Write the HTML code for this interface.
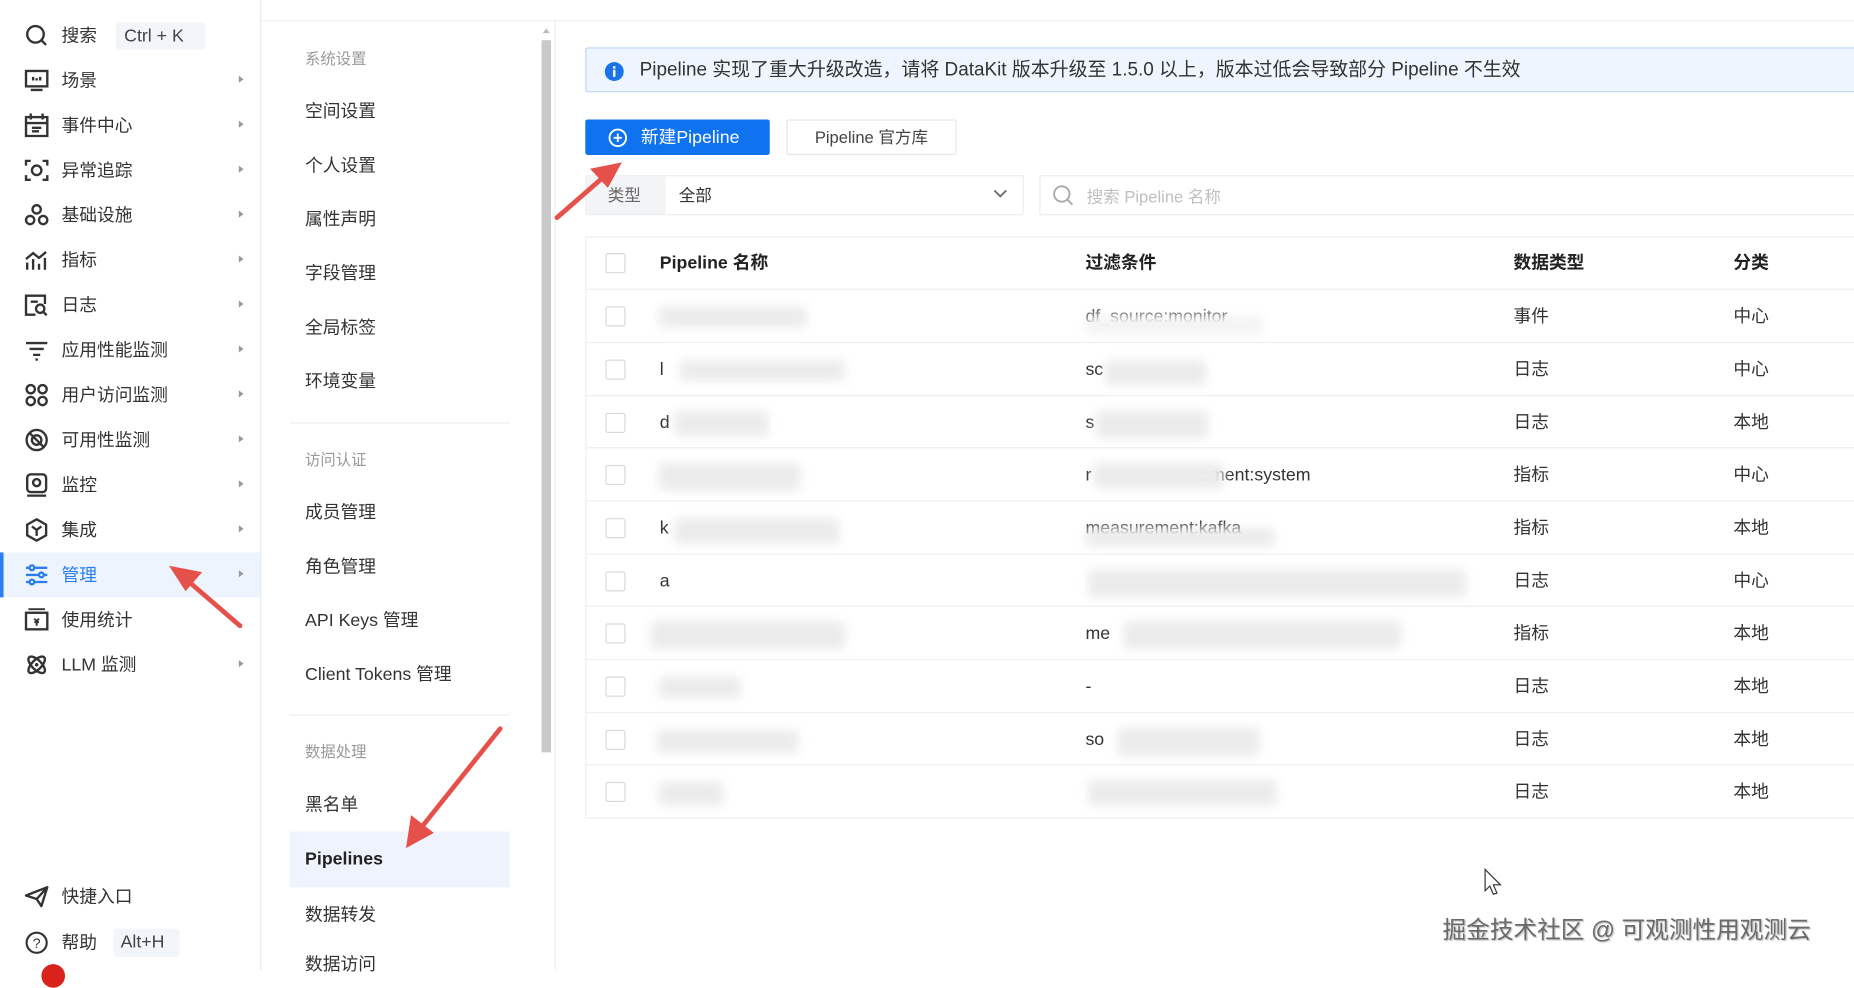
<!DOCTYPE html>
<html><head><meta charset="utf-8"><style>
*{box-sizing:border-box;margin:0;padding:0}
html,body{width:1854px;height:970px;overflow:hidden;background:#fff}
#w{position:absolute;left:0;top:0;width:1568px;height:820px;transform:scale(1.18240,1.18293);transform-origin:0 0;font-family:"Liberation Sans","Noto Sans CJK SC",sans-serif;color:#333}
.a{position:absolute}
.si{position:absolute;left:20px;width:22px;height:20px}
.st{position:absolute;left:52px;font-size:15px;color:#333;line-height:22px}
.ar{position:absolute;left:202px;width:0;height:0;border-left:4px solid #999;border-top:3.5px solid transparent;border-bottom:3.5px solid transparent}
.m{position:absolute;left:258px;font-size:15px;color:#333;line-height:22px}
.g{position:absolute;left:258px;font-size:13px;color:#999;line-height:20px}
.row{position:absolute;left:495px;width:1073px;height:45px;border-top:1px solid #eceef1;font-size:15px}
.row span{position:absolute;top:13px;line-height:20px}
.cb{position:absolute;left:17px;top:14px;width:17px;height:17px;border:1px solid #d9d9d9;border-radius:2px;background:#fff}
.bl{position:absolute;background:#ececec;filter:blur(4px);border-radius:4px}
</style></head><body><div id="w">
<div class="a" style="left:220px;top:17px;width:1348px;height:1px;background:#eef0f2"></div>
<div class="a" style="left:220px;top:0;width:1px;height:820px;background:#e8e8e8"></div>
<div class="a" style="left:469px;top:17px;width:1px;height:803px;background:#eef0f2"></div>

<svg class="si" style="top:20px" viewBox="0 0 22 20"><circle cx="10" cy="9" r="7" fill="none" stroke="#333" stroke-width="2"/><path d="M15 14l4 4" stroke="#333" stroke-width="2"/></svg>
<div class="st" style="top:20px">搜索</div>
<div class="a" style="left:98px;top:19px;width:76px;height:23px;background:#f2f5fa;border-radius:3px;font-size:15px;line-height:23px;padding-left:7px;color:#444">Ctrl + K</div>
<svg class="si" style="top:58px" viewBox="0 0 22 20"><rect x="2" y="2" width="18" height="13" fill="none" stroke="#333" stroke-width="2"/><path d="M6 18h10M8 7v3M11 8v2M14 7v3" stroke="#333" stroke-width="2"/></svg>
<div class="st" style="top:58px">场景</div><div class="ar" style="top:64px"></div>
<svg class="si" style="top:96px" viewBox="0 0 22 20"><rect x="2" y="3" width="18" height="16" fill="none" stroke="#333" stroke-width="2"/><path d="M6 0v5M16 0v5M2 8h18M7 12h8M7 15h6" stroke="#333" stroke-width="2"/></svg>
<div class="st" style="top:96px">事件中心</div><div class="ar" style="top:102px"></div>
<svg class="si" style="top:134px" viewBox="0 0 22 20"><path d="M2 6V2h4M16 2h4v4M20 14v4h-4M6 18H2v-4" fill="none" stroke="#333" stroke-width="2"/><circle cx="11" cy="10" r="4" fill="none" stroke="#333" stroke-width="2"/></svg>
<div class="st" style="top:134px">异常追踪</div><div class="ar" style="top:140px"></div>
<svg class="si" style="top:172px" viewBox="0 0 22 20"><circle cx="11" cy="5" r="3.5" fill="none" stroke="#333" stroke-width="2"/><circle cx="5.5" cy="14" r="3.5" fill="none" stroke="#333" stroke-width="2"/><circle cx="16.5" cy="14" r="3.5" fill="none" stroke="#333" stroke-width="2"/></svg>
<div class="st" style="top:172px">基础设施</div><div class="ar" style="top:178px"></div>
<svg class="si" style="top:210px" viewBox="0 0 22 20"><path d="M3 18v-6M8 18V9M13 18v-5M18 18V8M2 9l6-5 5 4 6-5" fill="none" stroke="#333" stroke-width="2"/></svg>
<div class="st" style="top:210px">指标</div><div class="ar" style="top:216px"></div>
<svg class="si" style="top:248px" viewBox="0 0 22 20"><path d="M10 18H2V2h16v7" fill="none" stroke="#333" stroke-width="2"/><circle cx="14" cy="13" r="3.5" fill="none" stroke="#333" stroke-width="2"/><path d="M16.5 15.5l3 3M6 7h6" stroke="#333" stroke-width="2"/></svg>
<div class="st" style="top:248px">日志</div><div class="ar" style="top:254px"></div>
<svg class="si" style="top:286px" viewBox="0 0 22 20"><path d="M2 4h18M5 9h12M8 14h6M10 18h2" stroke="#333" stroke-width="2"/></svg>
<div class="st" style="top:286px">应用性能监测</div><div class="ar" style="top:292px"></div>
<svg class="si" style="top:324px" viewBox="0 0 22 20"><circle cx="6" cy="5" r="3.5" fill="none" stroke="#333" stroke-width="2"/><circle cx="16" cy="5" r="3.5" fill="none" stroke="#333" stroke-width="2"/><circle cx="6" cy="15" r="3.5" fill="none" stroke="#333" stroke-width="2"/><circle cx="16" cy="15" r="3.5" fill="none" stroke="#333" stroke-width="2"/></svg>
<div class="st" style="top:324px">用户访问监测</div><div class="ar" style="top:330px"></div>
<svg class="si" style="top:362px" viewBox="0 0 22 20"><circle cx="11" cy="10" r="8.5" fill="none" stroke="#333" stroke-width="2"/><circle cx="11" cy="10" r="4" fill="none" stroke="#333" stroke-width="2"/><path d="M5 4l12 12" stroke="#333" stroke-width="2"/></svg>
<div class="st" style="top:362px">可用性监测</div><div class="ar" style="top:368px"></div>
<svg class="si" style="top:400px" viewBox="0 0 22 20"><rect x="3" y="1" width="16" height="15" rx="3" fill="none" stroke="#333" stroke-width="2"/><circle cx="11" cy="8" r="3" fill="none" stroke="#333" stroke-width="2"/><path d="M3 19h16" stroke="#333" stroke-width="2"/></svg>
<div class="st" style="top:400px">监控</div><div class="ar" style="top:406px"></div>
<svg class="si" style="top:438px" viewBox="0 0 22 20"><path d="M11 1l8 4.5v9L11 19l-8-4.5v-9z" fill="none" stroke="#333" stroke-width="2"/><path d="M7 7l4 3 4-3M11 10v5" fill="none" stroke="#333" stroke-width="2"/></svg>
<div class="st" style="top:438px">集成</div><div class="ar" style="top:444px"></div>
<div class="a" style="left:0;top:467px;width:220px;height:38px;background:#eef4fe"></div>
<div class="a" style="left:0;top:467px;width:3px;height:38px;background:#2a7ef0"></div>
<svg class="si" style="top:476px" viewBox="0 0 22 20"><path d="M2 4h18M2 10h18M2 16h18" stroke="#2a7ef0" stroke-width="2"/><circle cx="7" cy="4" r="2" fill="#fff" stroke="#2a7ef0" stroke-width="2"/><circle cx="15" cy="10" r="2" fill="#fff" stroke="#2a7ef0" stroke-width="2"/><circle cx="7" cy="16" r="2" fill="#fff" stroke="#2a7ef0" stroke-width="2"/></svg>
<div class="st" style="top:476px;color:#2a7ef0">管理</div><div class="ar" style="top:482px"></div>
<svg class="si" style="top:514px" viewBox="0 0 22 20"><rect x="2" y="4" width="18" height="14" fill="none" stroke="#333" stroke-width="2"/><path d="M4 1h14M9 9l2 2 2-2M11 11v4M9 12h4" stroke="#333" stroke-width="1.6" fill="none"/></svg>
<div class="st" style="top:514px">使用统计</div>
<svg class="si" style="top:552px" viewBox="0 0 22 20"><ellipse cx="11" cy="10" rx="9" ry="4" transform="rotate(45 11 10)" fill="none" stroke="#333" stroke-width="2"/><ellipse cx="11" cy="10" rx="9" ry="4" transform="rotate(-45 11 10)" fill="none" stroke="#333" stroke-width="2"/><circle cx="11" cy="10" r="1.5" fill="#333"/></svg>
<div class="st" style="top:552px">LLM 监测</div><div class="ar" style="top:558px"></div>
<svg class="si" style="top:748px" viewBox="0 0 22 20"><path d="M2 9L20 2l-5 16-4-6zM11 12l9-10" fill="none" stroke="#333" stroke-width="2" stroke-linejoin="round"/></svg>
<div class="st" style="top:748px">快捷入口</div>
<svg class="si" style="top:787px" viewBox="0 0 22 20"><circle cx="11" cy="10" r="8.5" fill="none" stroke="#333" stroke-width="1.8"/><text x="11" y="14.5" font-size="12" text-anchor="middle" fill="#333" font-family="Liberation Sans">?</text></svg>
<div class="st" style="top:787px">帮助</div>
<div class="a" style="left:96px;top:785px;width:56px;height:24px;background:#f2f5fa;border-radius:3px;font-size:15px;line-height:24px;padding-left:6px;color:#444">Alt+H</div>
<div class="a" style="left:35px;top:815px;width:20px;height:20px;border-radius:50%;background:#d9221c"></div>

<div class="g" style="top:40px">系统设置</div>
<div class="m" style="top:84px">空间设置</div>
<div class="m" style="top:130px">个人设置</div>
<div class="m" style="top:175px">属性声明</div>
<div class="m" style="top:221px">字段管理</div>
<div class="m" style="top:267px">全局标签</div>
<div class="m" style="top:312px">环境变量</div>
<div class="a" style="left:245px;top:357px;width:186px;height:1px;background:#eceef1"></div>
<div class="g" style="top:379px">访问认证</div>
<div class="m" style="top:423px">成员管理</div>
<div class="m" style="top:469px">角色管理</div>
<div class="m" style="top:514px">API Keys 管理</div>
<div class="m" style="top:560px">Client Tokens 管理</div>
<div class="a" style="left:245px;top:604px;width:186px;height:1px;background:#eceef1"></div>
<div class="g" style="top:626px">数据处理</div>
<div class="m" style="top:670px">黑名单</div>
<div class="a" style="left:245px;top:703px;width:186px;height:47px;background:#eef3fd"></div>
<div class="m" style="top:716px;font-weight:bold;color:#222">Pipelines</div>
<div class="m" style="top:763px">数据转发</div>
<div class="m" style="top:805px">数据访问</div>
<div class="a" style="left:458px;top:34px;width:8px;height:602px;background:#c9c9c9"></div>
<div class="a" style="left:459px;top:24px;width:0;height:0;border-bottom:4px solid #bbb;border-left:3px solid transparent;border-right:3px solid transparent"></div>

<div class="a" style="left:495px;top:40px;width:1080px;height:38px;background:#eef5fe;border:1px solid #bcd6fb;border-radius:2px"></div>
<svg class="a" style="left:511px;top:52px" width="17" height="17" viewBox="0 0 17 17"><circle cx="8.5" cy="8.5" r="8" fill="#1a73e8"/><rect x="7.5" y="7" width="2" height="6" fill="#fff"/><rect x="7.5" y="4" width="2" height="2" fill="#fff"/></svg>
<div class="a" style="left:541px;top:50px;font-size:16px;line-height:20px;color:#333">Pipeline 实现了重大升级改造，请将 DataKit 版本升级至 1.5.0 以上，版本过低会导致部分 Pipeline 不生效</div>

<div class="a" style="left:495px;top:101px;width:156px;height:30px;background:#0f72ee;border-radius:2px"></div>
<svg class="a" style="left:514px;top:108px" width="17" height="17" viewBox="0 0 17 17"><circle cx="8.5" cy="8.5" r="7" fill="none" stroke="#fff" stroke-width="1.6"/><path d="M8.5 5v7M5 8.5h7" stroke="#fff" stroke-width="1.6"/></svg>
<div class="a" style="left:542px;top:107px;font-size:15px;line-height:20px;color:#fff">新建Pipeline</div>
<div class="a" style="left:665px;top:101px;width:144px;height:30px;border:1px solid #e6e6e6;border-radius:2px;font-size:14px;line-height:28px;text-align:center;color:#444">Pipeline 官方库</div>

<div class="a" style="left:495px;top:148px;width:371px;height:34px;border:1px solid #ebedf0;border-radius:2px"></div>
<div class="a" style="left:496px;top:149px;width:67px;height:32px;background:#f3f4f6;font-size:14px;line-height:32px;padding-left:18px;color:#666">类型</div>
<div class="a" style="left:574px;top:155px;font-size:14px;line-height:20px;color:#333">全部</div>
<svg class="a" style="left:840px;top:160px" width="12" height="8" viewBox="0 0 12 8"><path d="M1 1l5 5 5-5" fill="none" stroke="#666" stroke-width="1.5"/></svg>
<div class="a" style="left:879px;top:148px;width:700px;height:34px;border:1px solid #ebedf0;border-radius:2px"></div>
<svg class="a" style="left:890px;top:156px" width="19" height="19" viewBox="0 0 19 19"><circle cx="8" cy="8" r="6.5" fill="none" stroke="#aaa" stroke-width="1.6"/><path d="M13 13l4 4" stroke="#aaa" stroke-width="1.6"/></svg>
<div class="a" style="left:919px;top:156px;font-size:14px;line-height:20px;color:#c0c0c0">搜索 Pipeline 名称</div>

<div class="a" style="left:495px;top:200px;width:1080px;height:492px;border:1px solid #eceef1"></div>
<div class="row" style="top:200px;border-top:none;font-weight:bold;color:#222"><div class="cb"></div><span style="left:63px">Pipeline 名称</span><span style="left:423px">过滤条件</span><span style="left:785px">数据类型</span><span style="left:971px">分类</span></div>
<div class="row" style="top:244px"><div class="cb"></div><div class="bl" style="left:62px;top:14px;width:125px;height:18px"></div><span style="left:423px;color:#555">df_source:monitor</span><div class="bl" style="left:423px;top:22px;width:150px;height:16px;background:#f4f4f4"></div><span style="left:785px">事件</span><span style="left:971px">中心</span></div>
<div class="row" style="top:289px"><div class="cb"></div><span style="left:63px">l</span><div class="bl" style="left:80px;top:14px;width:140px;height:18px"></div><span style="left:423px">sc</span><div class="bl" style="left:440px;top:14px;width:85px;height:22px"></div><span style="left:785px">日志</span><span style="left:971px">中心</span></div>
<div class="row" style="top:334px"><div class="cb"></div><span style="left:63px">d</span><div class="bl" style="left:75px;top:12px;width:80px;height:22px"></div><span style="left:423px">s</span><div class="bl" style="left:432px;top:12px;width:95px;height:24px"></div><span style="left:785px">日志</span><span style="left:971px">本地</span></div>
<div class="row" style="top:378px"><div class="cb"></div><div class="bl" style="left:62px;top:12px;width:120px;height:24px"></div><span style="left:423px">r</span><span style="left:520px">ement:system</span><div class="bl" style="left:430px;top:12px;width:110px;height:22px"></div><span style="left:785px">指标</span><span style="left:971px">中心</span></div>
<div class="row" style="top:423px"><div class="cb"></div><span style="left:63px">k</span><div class="bl" style="left:75px;top:14px;width:140px;height:22px"></div><span style="left:423px">measurement:kafka</span><div class="bl" style="left:423px;top:22px;width:160px;height:16px"></div><span style="left:785px">指标</span><span style="left:971px">本地</span></div>
<div class="row" style="top:468px"><div class="cb"></div><span style="left:63px">a</span><div class="bl" style="left:425px;top:12px;width:320px;height:24px"></div><span style="left:785px">日志</span><span style="left:971px">中心</span></div>
<div class="row" style="top:512px"><div class="cb"></div><div class="bl" style="left:55px;top:12px;width:165px;height:24px"></div><span style="left:423px">me</span><div class="bl" style="left:455px;top:12px;width:235px;height:24px"></div><span style="left:785px">指标</span><span style="left:971px">本地</span></div>
<div class="row" style="top:557px"><div class="cb"></div><div class="bl" style="left:62px;top:14px;width:70px;height:18px"></div><span style="left:423px">-</span><span style="left:785px">日志</span><span style="left:971px">本地</span></div>
<div class="row" style="top:602px"><div class="cb"></div><div class="bl" style="left:60px;top:14px;width:120px;height:20px"></div><span style="left:423px">so</span><div class="bl" style="left:450px;top:12px;width:120px;height:24px"></div><span style="left:785px">日志</span><span style="left:971px">本地</span></div>
<div class="row" style="top:646px"><div class="cb"></div><div class="bl" style="left:62px;top:14px;width:55px;height:20px"></div><div class="bl" style="left:425px;top:12px;width:160px;height:22px"></div><span style="left:785px">日志</span><span style="left:971px">本地</span></div>

<svg class="a" style="left:0;top:0" width="1568" height="820" viewBox="0 0 1568 820">
<g stroke="#e6504a" stroke-width="4" fill="#e6504a" stroke-linecap="round">
<path d="M471 184L510 150"/><path d="M525 138L500 143L514 158z" stroke-width="1"/>
<path d="M203 529L160 492"/><path d="M144 479L170 484L157 499z" stroke-width="1"/>
<path d="M423 616L356 700"/><path d="M344 716L348 690L366 704z" stroke-width="1"/>
</g>
<path d="M1256 735v18l4-4 3 7 3-1-3-7h6z" fill="#fff" stroke="#333" stroke-width="1"/>
</svg>
<div class="a" style="left:1220px;top:774px;font-size:20px;line-height:26px;color:#6a6a6a;text-shadow:1px 1px 1px #bbb">掘金技术社区 @ 可观测性用观测云</div>
</div></body></html>
